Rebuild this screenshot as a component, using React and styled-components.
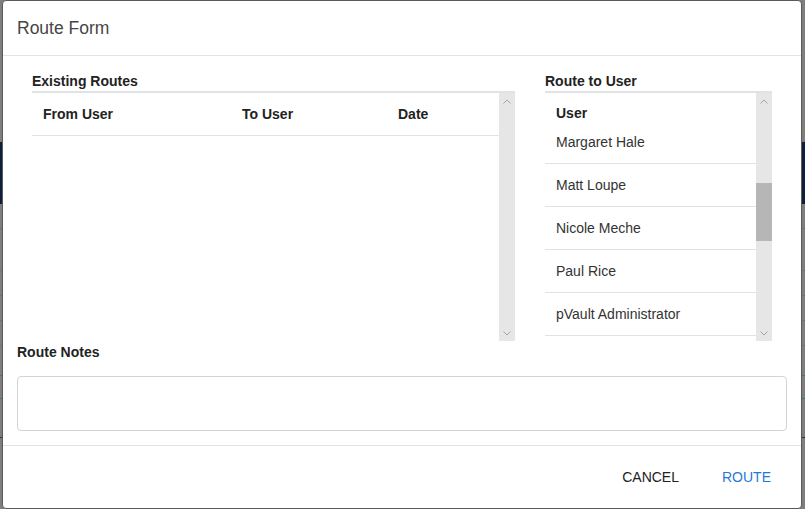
import React from 'react';
import styled, { createGlobalStyle } from 'styled-components';

const GlobalStyle = createGlobalStyle`
  html, body {
    margin: 0;
    padding: 0;
    width: 805px;
    height: 509px;
    overflow: hidden;
    font-family: "Liberation Sans", Arial, sans-serif;
  }
`;

// Page behind the modal (dimmed)
const Backdrop = styled.div`
  position: relative;
  width: 805px;
  height: 509px;
  background-color: #7e7e7e;
  overflow: hidden;
`;

const NavBand = styled.div`
  margin-top: 142px;
  height: 62px;
  background-color: #0d1f3a;
`;

const BackRow = styled.div`
  height: ${(p) => p.h}px;
  border-bottom: 1px solid ${(p) => p.line || '#6f6f6f'};
`;

// Modal
const Dialog = styled.div`
  position: absolute;
  top: 0;
  left: 2px;
  width: 800px;
  height: 509px;
  background-color: #fff;
  border: 1px solid #5a5a5a;
  border-radius: 4px;
  display: flex;
  flex-direction: column;
  box-sizing: border-box;
`;

const Header = styled.div`
  height: 54px;
  display: flex;
  align-items: center;
  padding-left: 14px;
  border-bottom: 1px solid #e3e3e3;
`;

const Title = styled.h2`
  margin: 0;
  font-size: 17.5px;
  font-weight: 400;
  color: #464646;
`;

const Body = styled.div`
  padding: 15px 14px 14px 14px;
  border-bottom: 1px solid #e3e3e3;
`;

const Grid = styled.div`
  display: grid;
  grid-template-columns: 513px 1fr;
`;

const Column = styled.div`
  padding: 0 15px;
`;

const Label = styled.div`
  font-size: 14px;
  font-weight: 700;
  line-height: 20px;
  color: #222;
`;

const ScrollBox = styled.div`
  border-top: 2px solid #dfe2e6;
  height: 248px;
  display: flex;
`;

const ScrollContent = styled.div`
  flex: 1;
  overflow: hidden;
`;

const TableHead = styled.div`
  display: grid;
  grid-template-columns: 199px 156px 1fr;
  border-bottom: 1px solid #dfe2e6;
`;

const HeadCell = styled.div`
  padding: 11px;
  font-size: 14px;
  font-weight: 700;
  line-height: 20px;
  color: #222;
`;

const ListHead = styled.div`
  padding: 10px 11px 5px;
  font-size: 14px;
  font-weight: 700;
  line-height: 20px;
  color: #222;
`;

const ListRow = styled.div`
  padding: ${(p) => (p.clipped ? '4px 11px 11px' : '11px')};
  font-size: 14px;
  line-height: 20px;
  color: #333;
  border-bottom: 1px solid #dfe2e6;
  white-space: nowrap;
`;

const Track = styled.div`
  width: 16px;
  background-color: #e6e6e6;
  display: flex;
  flex-direction: column;
`;

const Arrow = styled.div`
  height: 16px;
  display: flex;
  align-items: center;
  justify-content: center;
`;

const Rail = styled.div`
  flex: 1;
  display: flex;
  flex-direction: column;
`;

const Thumb = styled.div`
  margin-top: ${(p) => p.offset}px;
  height: ${(p) => p.size}px;
  background-color: #b6b6b6;
`;

const NotesLabel = styled(Label)`
  margin-top: 1px;
`;

const Notes = styled.textarea`
  display: block;
  box-sizing: border-box;
  width: 100%;
  height: 55px;
  margin-top: 14px;
  border: 1px solid #cfd4da;
  border-radius: 4px;
  resize: none;
  font-family: inherit;
  font-size: 14px;
  outline: none;
`;

const Footer = styled.div`
  display: flex;
  justify-content: flex-end;
  gap: 11px;
  padding: 13px 14px 0 0;
`;

const TextButton = styled.button`
  height: 36px;
  padding: 0 16px;
  border: none;
  background: none;
  font-family: inherit;
  font-size: 14px;
  text-transform: uppercase;
  color: ${(p) => (p.primary ? '#1f7ad6' : '#222')};
  cursor: pointer;
`;

const Chevron = ({ up }) => (
  <svg width="8" height="5" viewBox="0 0 8 5">
    <path
      d={up ? 'M0.5 4.5 L4 1 L7.5 4.5' : 'M0.5 0.5 L4 4 L7.5 0.5'}
      fill="none"
      stroke="#a5a5a5"
      strokeWidth="1"
    />
  </svg>
);

const Scrollbar = ({ thumb }) => (
  <Track>
    <Arrow>
      <Chevron up />
    </Arrow>
    <Rail>{thumb && <Thumb offset={thumb.offset} size={thumb.size} />}</Rail>
    <Arrow>
      <Chevron />
    </Arrow>
  </Track>
);

const users = ['Matt Loupe', 'Nicole Meche', 'Paul Rice', 'pVault Administrator'];

const App = () => (
  <>
    <GlobalStyle />
    <Backdrop>
      <NavBand />
      <BackRow h={24} />
      <BackRow h={41} />
      <BackRow h={24} />
      <BackRow h={24} />
      <BackRow h={24} />
      <BackRow h={29} line="#2f7f86" />
      <BackRow h={22} line="#2f7f86" />
      <BackRow h={38} line="#333" />

      <Dialog>
        <Header>
          <Title>Route Form</Title>
        </Header>
        <Body>
          <Grid>
            <Column>
              <Label>Existing Routes</Label>
              <ScrollBox>
                <ScrollContent>
                  <TableHead>
                    <HeadCell>From User</HeadCell>
                    <HeadCell>To User</HeadCell>
                    <HeadCell>Date</HeadCell>
                  </TableHead>
                </ScrollContent>
                <Scrollbar />
              </ScrollBox>
            </Column>
            <Column>
              <Label>Route to User</Label>
              <ScrollBox>
                <ScrollContent>
                  <ListHead>User</ListHead>
                  <ListRow clipped>Margaret Hale</ListRow>
                  {users.map((u) => (
                    <ListRow key={u}>{u}</ListRow>
                  ))}
                </ScrollContent>
                <Scrollbar thumb={{ offset: 74, size: 58 }} />
              </ScrollBox>
            </Column>
          </Grid>
          <NotesLabel>Route Notes</NotesLabel>
          <Notes />
        </Body>
        <Footer>
          <TextButton>Cancel</TextButton>
          <TextButton primary>Route</TextButton>
        </Footer>
      </Dialog>
    </Backdrop>
  </>
);

export default App;
